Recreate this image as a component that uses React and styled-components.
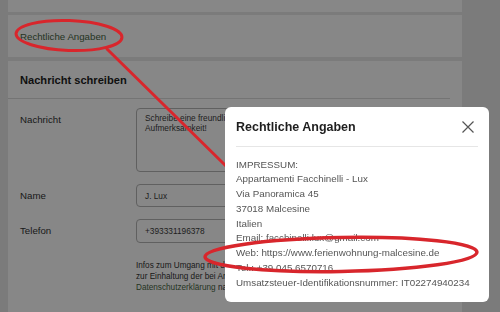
import React from 'react';
import styled, { createGlobalStyle } from 'styled-components';

const GlobalStyle = createGlobalStyle`
  html, body {
    margin: 0;
    padding: 0;
    background: #e9e9e9;
    font-family: "Liberation Sans", Arial, sans-serif;
    overflow: hidden;
  }
`;

const Page = styled.div`
  width: 500px;
  height: 312px;
  padding: 0 38px 0 8px;
  box-sizing: border-box;
  display: flex;
  flex-direction: column;
  gap: 3px;
`;

const Panel = styled.div`
  background: #fff;
  flex-shrink: 0;
  height: ${props => props.height || 'auto'};
`;

const LinkPanel = styled(Panel)`
  height: 42px;
  display: flex;
  align-items: center;
  padding-left: 12px;
  font-size: 9.7px;
  color: #47653f;
  margin-bottom: 1px;
`;

const FormPanel = styled(Panel)`
  flex: 1;
`;

const FormHeader = styled.div`
  height: 37px;
  display: flex;
  align-items: center;
  padding-left: 12px;
  margin-right: 12px;
  border-bottom: 1px solid #dcdcdc;
  font-size: 11.1px;
  font-weight: bold;
  color: #1e1e1e;
`;

const Form = styled.div`
  display: grid;
  grid-template-columns: 116px 1fr;
  row-gap: 12px;
  padding: 9px 12px 0 12px;
`;

const Label = styled.div`
  font-size: 9.7px;
  line-height: 11px;
  color: #333;
  align-self: ${props => props.multi ? 'start' : 'center'};
  padding-top: ${props => props.multi ? '5.5px' : '0'};
`;

const Field = styled.div`
  border: 1px solid #b5b5b5;
  border-radius: 4px;
  height: ${props => props.height};
  box-sizing: border-box;
  padding: ${props => props.multi ? '4px 8px' : '0 8px'};
  display: flex;
  align-items: ${props => props.multi ? 'flex-start' : 'center'};
  font-size: 8.3px;
  line-height: 10px;
  color: #3c3c3c;
  white-space: pre;
`;

const Note = styled.div`
  grid-column: 2;
  font-size: 8.2px;
  line-height: 11.3px;
  color: #333;
  white-space: nowrap;
  margin-top: 5px;
`;

const NoteLink = styled.span`
  color: #47653f;
`;

const Backdrop = styled.div`
  position: fixed;
  inset: 0;
  background: rgba(0, 0, 0, 0.47);
`;

const Modal = styled.div`
  position: fixed;
  left: 225px;
  top: 107px;
  width: 264px;
  height: 195px;
  background: #fff;
  border-radius: 6px;
  overflow: hidden;
`;

const ModalHeader = styled.div`
  height: 40px;
  display: flex;
  align-items: center;
  justify-content: space-between;
  margin: 0 11px;
  padding: 1px 4px 0 0;
  box-sizing: border-box;
  border-bottom: 1px solid #e6e6e6;
`;

const ModalTitle = styled.div`
  font-size: 12.5px;
  font-weight: bold;
  color: #1e1e1e;
`;

const CloseButton = styled.div`
  width: 12px;
  height: 12px;
  display: flex;
`;

const ModalBody = styled.div`
  padding: 10.5px 11px 0 11px;
  font-size: 9.8px;
  line-height: 14.75px;
  color: #555;
  white-space: nowrap;
`;

const Annotations = styled.svg`
  position: fixed;
  left: 0;
  top: 0;
  pointer-events: none;
`;

const impressum = [
  'IMPRESSUM:',
  'Appartamenti Facchinelli - Lux',
  'Via Panoramica 45',
  '37018 Malcesine',
  'Italien',
  'Email: facchinelli.lux@gmail.com',
  'Web: https://www.ferienwohnung-malcesine.de',
  'Tel.: +39 045 6570716',
  'Umsatzsteuer-Identifikationsnummer: IT02274940234',
];

const App = () => {
  return (
    <>
      <GlobalStyle />
      <Page>
        <Panel height="12px" />
        <LinkPanel>Rechtliche Angaben</LinkPanel>
        <FormPanel>
          <FormHeader>Nachricht schreiben</FormHeader>
          <Form>
            <Label multi>Nachricht</Label>
            <Field multi height="64px">
              {'Schreibe eine freundliche Nachricht für mehr\nAufmerksamkeit!'}
            </Field>
            <Label>Name</Label>
            <Field height="23px">J. Lux</Field>
            <Label>Telefon</Label>
            <Field height="23.5px">+393331196378</Field>
            <Note>
              Infos zum Umgang mit deinen Daten und<br />
              zur Einhaltung der bei Anfragen geltenden Regeln<br />
              <NoteLink>Datenschutzerklärung</NoteLink> nach DSGVO.
            </Note>
          </Form>
        </FormPanel>
      </Page>

      <Backdrop />

      <Annotations width="500" height="312" viewBox="0 0 500 312">
        <ellipse cx="69" cy="35.5" rx="53" ry="15" fill="none" stroke="#d8262c" strokeWidth="3" transform="rotate(2 69 35.5)" />
        <line x1="107" y1="49" x2="226" y2="166" stroke="#d8262c" strokeWidth="3" strokeLinecap="round" />
      </Annotations>

      <Modal>
        <ModalHeader>
          <ModalTitle>Rechtliche Angaben</ModalTitle>
          <CloseButton>
            <svg width="12" height="12" viewBox="0 0 12 12">
              <path d="M0.5 0.5 L11.5 11.5 M11.5 0.5 L0.5 11.5" stroke="#555" strokeWidth="1.2" fill="none" />
            </svg>
          </CloseButton>
        </ModalHeader>
        <ModalBody>
          {impressum.map(line => (
            <div key={line}>{line}</div>
          ))}
        </ModalBody>
      </Modal>

      <Annotations width="500" height="312" viewBox="0 0 500 312">
        <ellipse cx="341" cy="254.5" rx="136" ry="17" fill="none" stroke="#d8262c" strokeWidth="3.5" transform="rotate(-1 341 254.5)" />
      </Annotations>
    </>
  );
};

export default App;
